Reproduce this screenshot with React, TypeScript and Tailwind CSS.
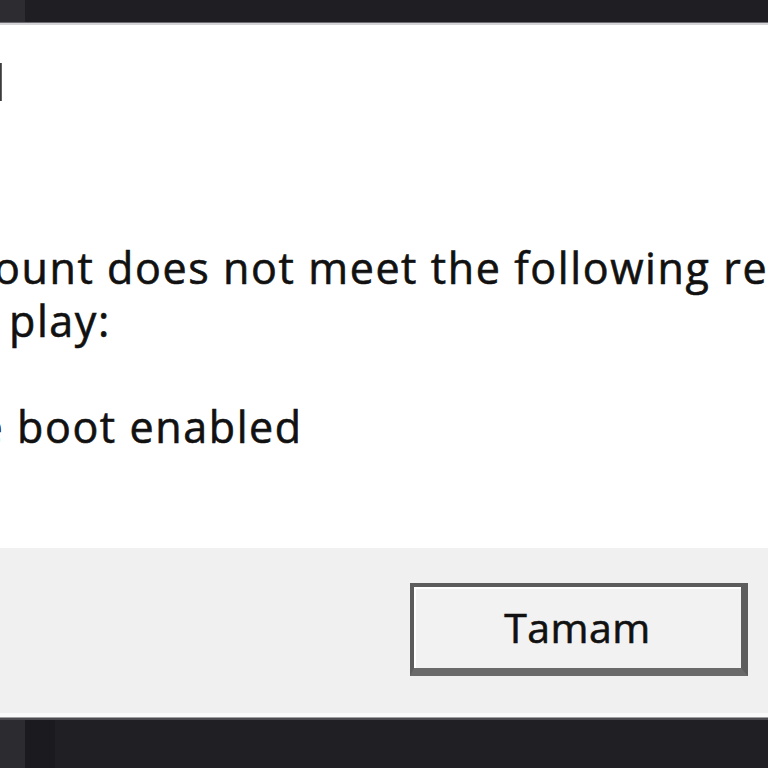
import type { ReactNode } from "react";

const FONT = "font-['Open_Sans','Noto_Sans',sans-serif]";

export default function App() {
  return (
    <div
      className={`flex h-[768px] w-[768px] flex-col overflow-hidden bg-white ${FONT} text-[#111]`}
    >
      <TopBar />
      <section className="flex flex-1 flex-col overflow-hidden bg-white">
        <div className="mt-[32px] flex h-[50px] text-[50px] leading-[50px] text-[#3c3c3c]">
          <span className="flex w-[6px] justify-end whitespace-pre">
            <span>Vanguard</span>
          </span>
        </div>
        <div className="mt-[134px] flex flex-col text-[43px] leading-[53px] tracking-[1.6px] [-webkit-text-stroke:0.6px_#111]">
          <Line hidden="acc" offset="ml-[-6px]">
            ount does not meet the following requirements
          </Line>
          <Line hidden="in order to " offset="ml-[9px]">
            play:
          </Line>
          <div className="h-[53px]" />
          <Line hidden="Secure " offset="ml-[17px]">
            boot enabled
          </Line>
        </div>
      </section>
      <footer className="flex h-[165px] shrink-0 items-start justify-end bg-[#f0f0f0] pr-[20px] pt-[35px]">
        <button
          type="button"
          className="flex h-[93px] w-[338px] items-center justify-center border-[4px] border-b-[8px] border-r-[7px] border-[#5c5c5c] border-b-[#6a6a6a] bg-[#f2f2f2] text-[41px] tracking-[0.5px] text-[#111] shadow-[inset_2px_2px_0_#ffffff] [-webkit-text-stroke:0.6px_#111]"
        >
          Tamam
        </button>
      </footer>
      <BottomBar />
    </div>
  );
}

function Line(props: { hidden: string; offset: string; children: ReactNode }) {
  return (
    <div className={`flex whitespace-pre ${props.offset}`}>
      <span className="flex w-0 justify-end">
        <span>{props.hidden}</span>
      </span>
      <span>{props.children}</span>
    </div>
  );
}

function TopBar() {
  return (
    <div className="flex shrink-0 flex-col">
      <div className="flex h-[22px]">
        <div className="w-[25px] bg-[#2c2c31]" />
        <div className="flex-1 bg-[#1e1e23]" />
      </div>
      <div className="h-[1px] bg-[#6b6b70]" />
      <div className="h-[2px] bg-[#d4d4d8]" />
    </div>
  );
}

function BottomBar() {
  return (
    <div className="flex shrink-0 flex-col">
      <div className="h-[4px] bg-[#fafafa]" />
      <div className="h-[1px] bg-[#a0a0a0]" />
      <div className="h-[2px] bg-[#4a4a4f]" />
      <div className="flex h-[48px]">
        <div className="w-[25px] bg-[#2b2b30]" />
        <div className="w-[30px] bg-[#1b1b1f]" />
        <div className="flex-1 bg-[#1f1f24]" />
      </div>
    </div>
  );
}
